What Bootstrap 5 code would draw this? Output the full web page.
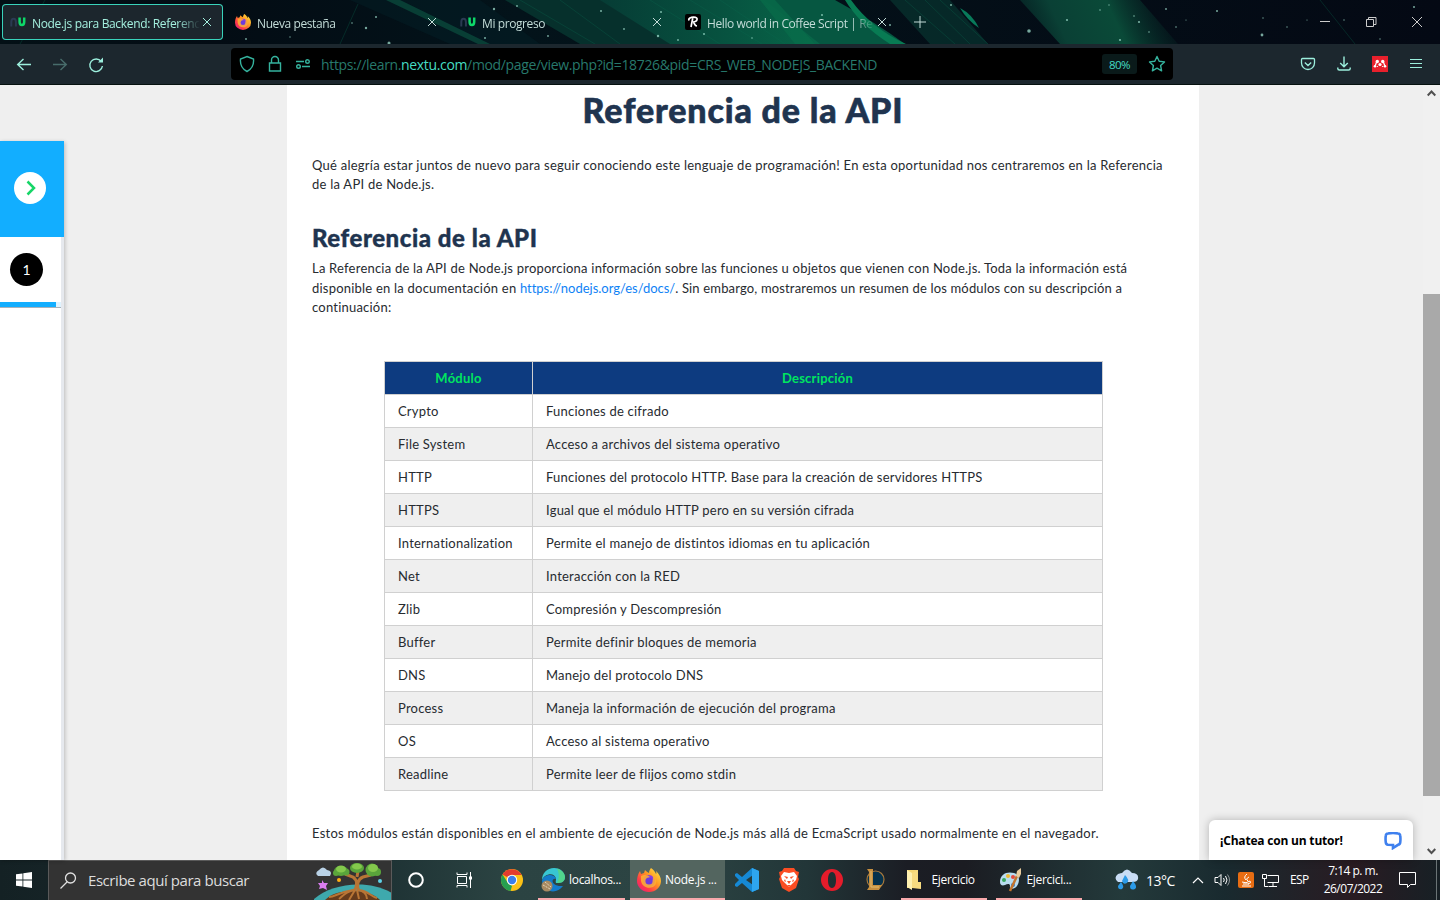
<!DOCTYPE html>
<html lang="es">
<head>
<meta charset="utf-8">
<title>Node.js para Backend: Referencia de la API</title>
<link href="https://cdn.jsdelivr.net/npm/bootstrap@5.3.0/dist/css/bootstrap.min.css" rel="stylesheet">
<style>
body{width:1440px;height:900px;overflow:hidden;font-family:"Open Sans","Noto Sans",sans-serif;background:#efefef}
svg{flex:none;display:block}
.tabstrip{height:44px;background:#030b14;padding-left:2px}
.skyline{left:0;top:0}
.tabitem{width:221px;height:36px;padding-left:8px;margin-right:4px;font-size:12px;color:#c3dcd8;border-radius:4px}
.tabitem.current{background:#1c262d;box-shadow:inset 0 0 0 1px #39d3bb;color:#a4f0df}
.tabtitle{width:168px;margin-left:6px;padding-top:3px;overflow:hidden;letter-spacing:-.4px;-webkit-mask-image:linear-gradient(90deg,#000 86%,transparent)}
.current .tabtitle{letter-spacing:-.34px}
.tabclose{margin-left:2px}
.winbtn{width:46px}
.toolbar{height:40px;background:#1c272e;color:#9cefdd}
.toolicons{padding-right:18px}
.urlbar{width:942px;height:32px;background:#000;border-radius:4px;margin-left:127px;padding-left:8px;color:#35b39e}
.urltext{font-size:14px;color:#27796c;margin-left:10px;letter-spacing:-.345px;padding-top:1px}
.urltext b{font-weight:400;color:#45dcc3}
.zoombox{width:35px;height:20px;background:#0a1a1a;border-radius:3px;font-size:11.500px;color:#45dcc3;letter-spacing:-.5px;padding-top:1px}
.seam{height:1px;background:#06110f}
.viewport{height:775px;background:#efefef}
.sidepanel{width:64px;height:719px;margin-top:56px;background:#e6e9ee;box-shadow:1px 1px 4px rgba(0,0,0,.22)}
.openbox{height:96px;background:#12aeff;padding:31px 0 0 14px}
.stepbox{width:61px;height:71px;padding:16px 0 0 10px;background:#fff;border-bottom:1px solid #a8b2ba}
.stepnum{width:33px;height:33px;background:#000;color:#fff;font:14px Lato,sans-serif}
.stepbar{height:5px;margin:16px 0 0 -10px;background:#dff3ff}
.stepbar div{width:56px;height:5px;background:#12aeff}
.restbox{width:61px;background:#fff}
.page{width:912px;margin-left:223px;background:#fff;padding:0 25px;font:13px/19.5px Lato,sans-serif;color:#272b30;letter-spacing:.245px;font-variant-ligatures:none}
.page h1{font:900 34px/40px Lato,sans-serif;color:#20344f;margin:5px 0 26px;letter-spacing:.85px;-webkit-text-stroke:.6px #20344f}
.page h2{font:900 24px/30px Lato,sans-serif;color:#20344f;margin:29px 0 6px;letter-spacing:.55px;-webkit-text-stroke:.4px #20344f}
.page p{margin:0;white-space:nowrap}
.page .intro{line-height:19px}
.page .intro2{letter-spacing:.215px}
.page a{color:#0f82f5;text-decoration:none;letter-spacing:-.02px}
.page .tight{letter-spacing:.16px}
.modules{width:719px;margin:43px 0 33px 72px;border-collapse:collapse}
.modules td,.modules th{height:33px;border:1px solid #d0d0d0;padding:2px 13px 0;letter-spacing:.225px}
.modules th{background:#0d3b80;color:#00e55f;text-align:center}
.modules tr:nth-child(even) td{background:#efefef}
.modules th:first-child{width:148px}
.scroller{width:17px;background:#f0f0f0}
.thumb{height:502px;margin-top:196px;background:#a9a9a9}
.chatbox{right:27px;bottom:0;width:204px;height:40px;background:#fff;border-radius:6px 6px 0 0;box-shadow:0 0 9px rgba(0,0,0,.25);font-size:12px;font-weight:700;color:#000;padding:2px 11px 0;letter-spacing:-.2px}
.taskbar{height:40px;color:#fff;font-size:12px;background:linear-gradient(90deg,#142124 0,#1d3133 26%,#2b4342 35%,#2c4443 47%,#223638 56%,#1b1d24 63%,#1b1c22 67%,#203033 74%,#243a3b 78%,#192a2f 85%,#291b22 94%,#172025)}
.searchbox{width:344px;background:#333;border:1px solid #5a5a5a;border-bottom:0;font-size:15px;color:#ddd;padding-left:11px}
.searchbox span{margin-left:11px;letter-spacing:-.44px}
.task{width:48px}
.slim{width:42.6px;padding-left:1px}
.running{border-bottom:2px solid #f9a9ac;letter-spacing:-.3px;padding-top:1px}
.running.active{background:#53655f}
.edge{width:87px;margin-left:2px;padding-left:3px}
.firefox{width:95px;margin-left:5px;padding-left:7px}
.folder{width:86px;margin-left:6px;padding-left:5px}
.paint{width:86px;margin-left:9px;padding-left:3px}
.degrees{font-size:14px;margin-left:7px;width:46px;letter-spacing:-.5px;padding-top:1px}
.clock{width:64px;font-size:12px;line-height:18px;letter-spacing:-.5px}
.showdesk{border-left:1px solid #6b7476;width:4px;height:40px}
</style>
</head>
<body class="d-flex flex-column">
<svg width="0" height="0" class="position-absolute"><defs>
<linearGradient id="ff" x1="1" y1="0" x2="0" y2="1"><stop offset="0" stop-color="#fff04a"/><stop offset=".4" stop-color="#ff9a22"/><stop offset=".7" stop-color="#ff3b47"/><stop offset="1" stop-color="#e3188a"/></linearGradient>
<symbol id="fox" viewBox="0 0 24 24"><path fill="url(#ff)" d="M14 0c3 2 4 4 5 6 1-1 0-2 0-3 3 3 5 6 5 10a12 11 0 0 1-24 0c0-4 1-7 3-10l1 3 3-1 1-3c1 1 2 2 4 3 0-2 1-4 2-5z"/><circle cx="12" cy="13" r="6" fill="#8b3be0"/><path fill="#ffb02e" d="M4 8c3-2 7-1 9 1l-3 2c-2 1 0 4 3 3s4-4 2-7c5 2 6 9 1 12-5 2-11 0-12-6z" opacity=".85"/><circle cx="12" cy="13" r="3.6" fill="#6e3bdc"/></symbol>
<symbol id="nu" viewBox="0 0 16 10"><path d="M1.300 9.500V5a2.300 3.300 0 0 1 4.600 0v4.500" fill="none" stroke="#2b3a52" stroke-width="2"/><path d="M9.600 .5V5a2.300 3 0 0 0 4.600 0V.5" fill="none" stroke="#0ed769" stroke-width="2.500"/></symbol>
<symbol id="x" viewBox="0 0 10 10"><path d="M1 1l8 8M9 1L1 9" stroke="currentColor" fill="none"/></symbol>
<linearGradient id="sky" x2="1"><stop offset="0" stop-color="#031016"/><stop offset=".15" stop-color="#030c14"/><stop offset=".36" stop-color="#03131a"/><stop offset="1" stop-color="#040914"/></linearGradient>
<linearGradient id="aur" x2="1"><stop offset="0" stop-color="#063c35"/><stop offset=".5" stop-color="#07513f"/><stop offset="1" stop-color="#086a4a"/></linearGradient>
<linearGradient id="aur2" gradientUnits="userSpaceOnUse" x1="1000" y1="44" x2="1160" y2="-30"><stop offset="0" stop-color="#06302d" stop-opacity="0"/><stop offset=".35" stop-color="#0a4035"/><stop offset=".65" stop-color="#0a4a38"/><stop offset="1" stop-color="#072a28" stop-opacity="0"/></linearGradient>
</defs></svg>

<header class="tabstrip d-flex align-items-center position-relative">
<svg class="skyline position-absolute" width="1440" height="44">
<rect width="1440" height="44" fill="url(#sky)"/>
<path d="M350 0h130l60 44H450z" fill="#06242a" opacity=".4"/>
<path d="M505 0h120l70 44H580z" fill="#06302c"/>
<path d="M600 0h175l60 44H670z" fill="url(#aur)"/>
<path d="M765 0h70q40 22 70 44h-85z" fill="#065741"/><path d="M775 0l40 44h-20L760 0z" fill="#08704b" opacity=".6"/>
<path d="M845 0h6q20 28 55 44h-16Q860 25 845 0z" fill="#087b53"/>
<path d="M890 0h60l38 44h-58z" fill="#07302d" opacity=".8"/><path d="M1020 0h120l38 44h-118z" fill="url(#aur2)"/>
<path d="M386 0h14l90 44h-12z" fill="#0a493b" opacity=".8"/>
<path d="M960 8q12 6 19 20-12-8-19-20z" fill="#087a5a"/>
<g stroke="#0a6a50" opacity=".3"><path d="M20 44L45 0M340 44l18-40M520 0l75 44M560 0l60 44M650 0l70 44M690 0l72 44M720 0l65 44M905 0l50 44M925 0l45 44M940 0l48 44M1320 0l35 44"/></g>
<g fill="#9edccb" opacity=".75"><circle cx="389" cy="43" r="1.5"/><circle cx="366" cy="28" r="1.2"/><circle cx="376" cy="17" r="1"/><circle cx="352" cy="23" r=".8"/><circle cx="290" cy="37" r=".7"/><circle cx="246" cy="39" r=".9"/><circle cx="494" cy="9" r="1.2"/><circle cx="517" cy="6" r=".9"/><circle cx="601" cy="11" r="1"/><circle cx="485" cy="38" r="1"/><circle cx="548" cy="36" r=".9"/><circle cx="624" cy="29" r=".9"/><circle cx="661" cy="12" r="1"/><circle cx="658" cy="36" r="1.2"/><circle cx="678" cy="40" r=".9"/><circle cx="704" cy="34" r="1"/><circle cx="752" cy="38" r=".8"/><circle cx="822" cy="15" r="1"/><circle cx="890" cy="25" r="1"/><circle cx="951" cy="5" r="1"/><circle cx="1029" cy="31" r="1.8"/><circle cx="1067" cy="20" r="1.1"/><circle cx="1100" cy="10" r=".8"/><circle cx="1109" cy="5" r=".7"/><circle cx="1134" cy="16" r=".8"/><circle cx="1139" cy="22" r="1.1"/><circle cx="1120" cy="40" r="1.1"/><circle cx="1149" cy="32" r=".8"/><circle cx="1166" cy="9" r=".9"/><circle cx="1217" cy="11" r="1"/><circle cx="1176" cy="27" r=".8"/><circle cx="1186" cy="20" r=".6"/><circle cx="1262" cy="35" r="1.4"/><circle cx="1263" cy="18" r=".7"/><circle cx="1307" cy="20" r=".6"/><circle cx="1414" cy="7" r="1"/><circle cx="1344" cy="20" r=".7"/><circle cx="1287" cy="27" r=".7"/><circle cx="1380" cy="39" r=".7"/></g>
</svg>
<div class="tabitem current d-flex align-items-center position-relative"><svg width="16" height="10"><use href="#nu"/></svg><div class="tabtitle text-nowrap">Node.js para Backend: Referenci</div><svg width="10" height="10" class="tabclose"><use href="#x"/></svg></div>
<div class="tabitem d-flex align-items-center position-relative"><svg width="16" height="16"><use href="#fox"/></svg><div class="tabtitle text-nowrap">Nueva pestaña</div><svg width="10" height="10" class="tabclose"><use href="#x"/></svg></div>
<div class="tabitem d-flex align-items-center position-relative"><svg width="16" height="10"><use href="#nu"/></svg><div class="tabtitle text-nowrap">Mi progreso</div><svg width="10" height="10" class="tabclose"><use href="#x"/></svg></div>
<div class="tabitem d-flex align-items-center position-relative"><svg width="16" height="16"><rect width="16" height="16" rx="2"/><path d="M4 6.500C3 4 6 3.200 8.500 3.200c3 0 4 1 3.500 2.600S9.500 8 8 8M7.800 4L6 13M8.500 8.300c1.300 1 .8 3.500 3.500 3.700" stroke="#fff" stroke-width="1.700" fill="none"/></svg><div class="tabtitle text-nowrap">Hello world in Coffee Script | Re</div><svg width="10" height="10" class="tabclose"><use href="#x"/></svg></div>
<svg width="12" height="12" class="position-relative ms-2" style="color:#c3dcd8;left:4px"><path d="M6 0v12M0 6h12" stroke="currentColor"/></svg>
<div class="d-flex ms-auto position-relative text-light">
<div class="winbtn d-flex justify-content-center"><svg width="10" height="12"><path d="M0 5.500h10" stroke="#ccc"/></svg></div>
<div class="winbtn d-flex justify-content-center"><svg width="11" height="12" fill="none" stroke="#ccc"><path d="M.5 3.500h7v7h-7zM2.500 3V1.500h7.500v7H8"/></svg></div>
<div class="winbtn d-flex justify-content-center"><svg width="12" height="12" style="color:#ccc"><path d="M1 1l10 10M11 1L1 11" stroke="currentColor"/></svg></div>
</div>
</header>

<nav class="toolbar d-flex align-items-center">
<svg width="104" height="20" fill="none" stroke="currentColor" stroke-width="1.400"><path d="M31 10.500H18M23.500 5L17.700 10.500l5.800 5.500"/><path d="M53 10.500h13M60.500 5l5.800 5.500-5.800 5.500" opacity=".35"/><path d="M101.200 7.500a6.300 6.300 0 1 0 1.200 4.500"/><path d="M103 3.500v5h-5z" fill="currentColor" stroke="none"/></svg>
<div class="urlbar d-flex align-items-center">
<svg width="72" height="18" fill="none" stroke="currentColor" stroke-width="1.400"><path d="M8 1.500l6.500 2.500c.5 5-1.500 10-6.500 12.500C3 14 1 9 1.500 4z"/><path d="M30.500 8h11v8h-11zM32.500 8V5a3.500 3.500 0 0 1 7 0v3"/><path d="M57 6.500h8M63 11.500h8"/><circle cx="68.500" cy="6.500" r="1.800"/><circle cx="59.500" cy="11.500" r="1.800"/></svg>
<div class="urltext text-nowrap">https://learn.<b>nextu.com</b>/mod/page/view.php?id=18726&amp;pid=CRS_WEB_NODEJS_BACKEND</div>
<div class="zoombox ms-auto d-flex align-items-center justify-content-center">80%</div>
<svg width="18" height="18" style="margin:0 7px 0 11px" viewBox="0 0 18 18" fill="none" stroke="currentColor" stroke-width="1.400" stroke-linejoin="round"><path d="M9 1.500l2.200 4.700 5.300.7-3.900 3.600 1 5.300L9 13.200l-4.600 2.600 1-5.300L1.500 6.900l5.300-.7z"/></svg>
</div>
<div class="toolicons d-flex align-items-center ms-auto">
<svg width="16" height="16" fill="none" stroke="currentColor" stroke-width="1.300"><path d="M2.500 2.500h11q1 0 1 1V7a6.500 6.500 0 0 1-13 0V3.500q0-1 1-1zM4.800 6.500L8 9.500l3.200-3"/></svg>
<svg width="14" height="18" style="margin-left:21px" fill="none" stroke="currentColor" stroke-width="1.400"><path d="M7 1.500v10M3.200 8L7 11.700 10.800 8M.8 12.500v1q0 1.500 1.500 1.500h9.400q1.500 0 1.500-1.500v-1"/></svg>
<svg width="16" height="16" style="margin-left:21px"><path fill="#e8202c" d="M0 0h16v16H0z"/><g fill="#fff"><circle cx="5.300" cy="5.500" r="1.700"/><circle cx="10.700" cy="5.500" r="1.700"/><circle cx="3" cy="10.200" r="1.300"/><circle cx="8" cy="8.500" r="1.600"/><circle cx="13" cy="10.200" r="1.300"/><circle cx="5.500" cy="10.500" r=".6"/><circle cx="10.500" cy="10.500" r=".6"/></g><path d="M3.300 9.500l1.500-4M11.200 5.500l1.500 4" stroke="#fff" fill="none" stroke-width="1.200"/></svg>
<svg width="12" height="12" style="margin-left:22px" stroke="currentColor"><path d="M0 1.500h12M0 5.500h12M0 9.500h12"/></svg>
</div>
</nav>
<div class="seam"></div>

<main class="viewport d-flex position-relative">
<aside class="sidepanel d-flex flex-column">
<div class="openbox"><svg width="32" height="32"><circle cx="16" cy="16" r="16" fill="#fff"/><path d="M13.500 9.500l6.500 6.500-6.500 6.500" fill="none" stroke="#16d667" stroke-width="2.500"/></svg></div>
<div class="stepbox"><div class="stepnum rounded-circle d-flex align-items-center justify-content-center">1</div><div class="stepbar"><div></div></div></div>
<div class="restbox flex-grow-1"></div>
</aside>
<article class="page">
<h1 class="text-center">Referencia de la API</h1>
<p class="intro">Qué alegría estar juntos de nuevo para seguir conociendo este lenguaje de programación! En esta oportunidad nos centraremos en la Referencia<br>de la API de Node.js.</p>
<h2>Referencia de la API</h2>
<p class="intro2">La Referencia de la API de Node.js proporciona información sobre las funciones u objetos que vienen con Node.js. Toda la información está<br>disponible en la documentación en <a href="#">https://nodejs.org/es/docs/</a><span class="tight">. Sin embargo, mostraremos un resumen de los módulos con su descripción a</span><br>continuación:</p>
<table class="modules">
<thead><tr><th>Módulo</th><th>Descripción</th></tr></thead>
<tbody>
<tr><td>Crypto</td><td>Funciones de cifrado</td></tr>
<tr><td>File System</td><td>Acceso a archivos del sistema operativo</td></tr>
<tr><td>HTTP</td><td>Funciones del protocolo HTTP. Base para la creación de servidores HTTPS</td></tr>
<tr><td>HTTPS</td><td>Igual que el módulo HTTP pero en su versión cifrada</td></tr>
<tr><td>Internationalization</td><td>Permite el manejo de distintos idiomas en tu aplicación</td></tr>
<tr><td>Net</td><td>Interacción con la RED</td></tr>
<tr><td>Zlib</td><td>Compresión y Descompresión</td></tr>
<tr><td>Buffer</td><td>Permite definir bloques de memoria</td></tr>
<tr><td>DNS</td><td>Manejo del protocolo DNS</td></tr>
<tr><td>Process</td><td>Maneja la información de ejecución del programa</td></tr>
<tr><td>OS</td><td>Acceso al sistema operativo</td></tr>
<tr><td>Readline</td><td>Permite leer de flijos como stdin</td></tr>
</tbody></table>
<p>Estos módulos están disponibles en el ambiente de ejecución de Node.js más allá de EcmaScript usado normalmente en el navegador.</p>
</article>
<div class="scroller ms-auto d-flex flex-column align-items-center pt-1">
<svg width="9" height="9"><path d="M.7 6.500l3.800-4 3.800 4" fill="none" stroke="#505050" stroke-width="2"/></svg>
<div class="thumb w-100"></div>
<svg width="9" height="9" class="mt-auto mb-1"><path d="M.7 2l3.800 4 3.800-4" fill="none" stroke="#505050" stroke-width="2"/></svg>
</div>
<div class="chatbox position-absolute d-flex align-items-center justify-content-between"><span>¡Chatea con un tutor!</span><svg width="18" height="18"><path d="M4 1.500q5-1 10 0 2 .3 2.200 2 .5 3.500 0 7-.2 2-2.200 2.300L9 16v-3L4 12.800q-2-.3-2.200-2.300-.5-3.500 0-7Q2 1.800 4 1.500z" fill="none" stroke="#3f80ee" stroke-width="2.600"/></svg></div>
</main>

<footer class="taskbar d-flex align-items-stretch">
<div class="task d-flex align-items-center justify-content-center"><svg width="16" height="16" fill="#fff"><path d="M0 2.300l6.500-.9v6.200H0zM7.300 1.300L16 0v7.600H7.300zM0 8.400h6.500v6.200L0 13.700zM7.300 8.400H16V16l-8.700-1.300z"/></svg></div>
<div class="searchbox d-flex align-items-center"><svg width="17" height="17" fill="none" stroke="#e0e0e0" stroke-width="1.300"><circle cx="10.500" cy="6" r="5"/><path d="M7 10L.5 16.500"/></svg><span>Escribe aquí para buscar</span>
<svg width="77" height="39" class="ms-auto" viewBox="1 0 77 39"><path d="M0 39C18 22 55 18 79 32v7z" fill="#3ea9ad"/><path d="M12 39c6-6 14-9 30-9 12 0 20 4 25 9z" fill="#663b1c"/><path d="M41 30c4-6 3-11-1-14l-8-3M44 16l1-6M46 30c-3-6-1-12 4-14l8-2" fill="none" stroke="#b87535" stroke-width="3"/><path d="M16 36c6 0 10-5 24-7M26 38c4-3 6-7 15-9M36 39l6-10M46 38l-2-9M54 38c0-5-4-8-9-9M64 37c-6-1-8-7-18-8" fill="none" stroke="#b87535" stroke-width="2"/><g fill="#5aa53b"><ellipse cx="28" cy="10" rx="7" ry="5"/><circle cx="33" cy="11" r="3.500"/><circle cx="23" cy="12" r="3"/><ellipse cx="44" cy="7" rx="7" ry="5"/><circle cx="59" cy="9" r="6.500"/><circle cx="64" cy="11" r="4"/></g><g fill="#84c94c"><ellipse cx="28" cy="8" rx="5" ry="3.500"/><ellipse cx="44" cy="5.500" rx="5" ry="3"/><ellipse cx="60" cy="7" rx="5" ry="4"/></g><path d="M5 15q-4-3 1-6 4-5 8 0 6 1 3 6z" fill="#b9d2e6"/><path d="M9 19l2 3 4 0-2 3 1 4-4-2-4 1 1-3-2-3 4 0z" fill="#db7cf0"/><circle cx="26" cy="19" r="2" fill="#ffae13"/><circle cx="67" cy="20" r="2" fill="#5fd1e8"/></svg></div>
<div class="task d-flex align-items-center justify-content-center"><svg width="18" height="18"><circle cx="9" cy="9" r="6.800" fill="none" stroke="#fff" stroke-width="2"/></svg></div>
<div class="task d-flex align-items-center justify-content-center"><svg width="17" height="16" fill="none" stroke="#fff"><path d="M1 .5v2h10v-2M1 15.500v-2h10v2M1.500 4.500h9v7h-9zM14.500 0v16"/><path d="M13 4.500h3v3h-3z" fill="#fff" stroke="none"/></svg></div>
<div class="task d-flex align-items-center justify-content-center"><svg width="22" height="22" viewBox="0 0 22 22"><circle cx="11" cy="11" r="11" fill="#fbc116"/><path d="M11 11L1.500 5.500A11 11 0 0 1 20.600 6H11z" fill="#e33b2e"/><path d="M1.500 5.500L7 14l4 3-1.500 5A11 11 0 0 1 1.500 5.500z" fill="#269f50"/><circle cx="11" cy="11" r="5.200" fill="#fff"/><circle cx="11" cy="11" r="4.200" fill="#3c7eea"/></svg></div>
<div class="running edge d-flex align-items-center"><svg width="24" height="24" viewBox="0 0 24 24"><path d="M1 12C1 5 6 0 13 0s11 5 11 9c0 5-4 6-8 6-2 0-1-2-1-4-1-7-11-6-14 1z" fill="#38c6d2"/><path d="M16 .5c5 1.500 8 5 8 8.500 0 5-4 6-8 6 0-1 4-6 0-14.500z" fill="#57d87b" opacity=".8"/><path d="M1 12c3-7 13-6 14-1-5-2-6 8 7 7-4 6-12 7-17 3-3-2-4-5-4-9z" fill="#137bcb"/><circle cx="6" cy="18" r="5.500" fill="#a98a62"/><path d="M2 17l7 4M4 14l6 5" stroke="#e4d5b7" stroke-dasharray="2 1"/></svg><span class="ms-1">localhos...</span></div>
<div class="running active firefox d-flex align-items-center"><svg width="24" height="24"><use href="#fox"/></svg><span class="ms-1">Node.js ...</span></div>
<div class="slim d-flex align-items-center justify-content-center"><svg width="24" height="24" viewBox="0 0 24 24"><path d="M17 0l7 3v18l-7 3-10-9-5 4-2-1v-2l4-4-4-4V6l2-1 5 4zM18 7l-7 5 7 5z" fill="#1689d4" fill-rule="evenodd"/><path d="M17 0l7 3v18l-7 3z" fill="#2ea6ef"/></svg></div>
<div class="slim d-flex align-items-center justify-content-center"><svg width="20" height="24" viewBox="0 0 20 24"><path d="M5 0h10l2 3 3 1-1 5 1 2-3 9-7 4-7-4L0 11l1-2L0 4l3-1z" fill="#fb4d23"/><path d="M5 4l5 1 5-1 3 4-1 4-3 3-4 4-4-4-3-3-1-4z" fill="#fff"/><path d="M5 8l4 1-1 2zM15 8l-4 1 1 2zM8 13h4l-2 3zM6 11l1 3-2-1zM14 11l-1 3 2-1zM8 17h4l-2 2z" fill="#fb4d23"/></svg></div>
<div class="slim d-flex align-items-center justify-content-center"><svg width="24" height="24" viewBox="0 0 24 24"><path fill-rule="evenodd" fill="#e51c2b" d="M12 1a11 11 0 1 0 0 22 11 11 0 0 0 0-22zm0 3c3 0 4 4 4 8s-1 8-4 8-4-4-4-8 1-8 4-8z"/></svg></div>
<div class="slim d-flex align-items-center justify-content-center"><svg width="22" height="24" viewBox="0 0 22 24"><circle cx="11.500" cy="11.500" r="8.500" fill="#06324c" stroke="#a7783b" stroke-width="1.200"/><path d="M3 1h6v16h9l-3 5H3l2-3V4z" fill="#c68f3f"/><path d="M7 3v16h8" stroke="#e2bd71" fill="none"/></svg></div>
<div class="running folder d-flex align-items-center"><svg width="18" height="22" viewBox="0 0 18 22"><path d="M1 1h11v18H1z" fill="#f5d673"/><path d="M1 1l5 3v17l-5-3z" fill="#fff0b0"/><path d="M6 19V4l6-3v12h3v7z" fill="#f8db80"/></svg><span style="margin-left:7px">Ejercicio</span></div>
<div class="running paint d-flex align-items-center"><svg width="23" height="24" viewBox="0 0 23 24"><path d="M1 14C1 6 8 3 15 5c6 2 6 8 3 13-3 4-8 3-7 0 0-3-3-2-5-1-3 1-5 0-5-3z" fill="#b9dcef"/><circle cx="5" cy="12" r="2" fill="#38a85e"/><circle cx="9" cy="8" r="2" fill="#efbb33"/><circle cx="14" cy="9" r="2" fill="#e74b3e"/><circle cx="14" cy="17" r="2" fill="#3579cd"/><path d="M11 23l7-15" stroke="#c4742c" stroke-width="2.500"/><path d="M17 8l1-5 4-3v6l-2 4z" fill="#e9cb9c"/></svg><span style="margin-left:4px">Ejercici...</span></div>
<div class="ms-auto d-flex align-items-center">
<svg width="24" height="22" viewBox="0 0 24 22"><path d="M3 13q-5-4 0-8 3-1 4-1 5-7 10 0 7 0 6 6-1 3-5 3z" fill="#c9ddf5"/><path d="M10 6q5 5 2 8-4 2-5-2zM6 13q4 5 1 7-4 1-4-3zM18 12q5 6 2 8-5 2-5-3z" fill="#2c9be8"/></svg>
<span class="degrees">13°C</span>
<svg width="12" height="8"><path d="M1 7l5-5 5 5" fill="none" stroke="#fff" stroke-width="1.200"/></svg>
<svg width="17" height="16" style="margin-left:10px" fill="none" stroke="#fff"><path d="M1 5.500h3l3-3v11l-3-3H1zM9.500 6q1.500 2 0 4M11.500 4q3 4 0 8"/><path d="M13.500 2.500q4 5.500 0 11" opacity=".5"/></svg>
<svg width="16" height="16" style="margin-left:7px"><rect width="16" height="16" rx="2" fill="#e76d13"/><path d="M9 2q-4 3-1 6M11 5q-4 2-1 4M4 10q4 2 8-1 2 2-2 3M5 12h6M4 14h9" stroke="#fff" fill="none"/></svg>
<svg width="17" height="15" style="margin-left:8px" fill="none" stroke="#fff"><path d="M5.500 2.500h11v7h-11M11 10v3M7 13.500h8M.5 1.500h4v4h-4zM2.500 6v7.500h4"/></svg>
<span style="margin-left:11px;width:30px;letter-spacing:-.6px">ESP</span>
<div class="clock text-center text-nowrap" style="margin-left:1px">7:14 p. m.<br>26/07/2022</div>
<svg width="17" height="18" style="margin:0 20px 0 14px" fill="none" stroke="#fff"><path d="M.5 1.500h16v12h-5l-3 3v-3h-8z"/></svg><div class="showdesk"></div>
</div>
</footer>
<script src="https://cdn.jsdelivr.net/npm/bootstrap@5.3.0/dist/js/bootstrap.bundle.min.js"></script>
</body>
</html>
